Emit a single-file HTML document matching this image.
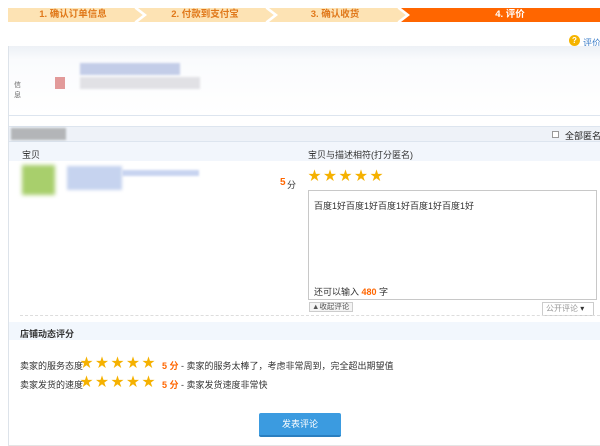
<!DOCTYPE html><html><head><meta charset="utf-8"><style>
*{margin:0;padding:0;box-sizing:border-box}
body{width:600px;height:446px;overflow:hidden;background:#fff;font-family:"Liberation Sans","Noto Sans CJK SC",sans-serif;font-size:9px;color:#333;position:relative}
.a{position:absolute;white-space:nowrap}
.step{position:absolute;top:8px;height:14px;line-height:14px;text-align:center;font-weight:bold;font-size:9.5px;color:#e0781a}
.st{color:#f5b100;font-size:13px;letter-spacing:2.5px;line-height:15px}
</style></head><body>
<svg class="a" style="left:8px;top:8px" width="592" height="14">
<polygon points="0,0 127,0 136,7 127,14 0,14" fill="#fde3b4"/>
<polygon points="130,0 258,0 267,7 258,14 130,14 139,7" fill="#fde3b4"/>
<polygon points="261,0 390,0 399,7 390,14 261,14 270,7" fill="#fde3b4"/>
<polygon points="393,0 592,0 592,14 393,14 402,7" fill="#ff6600"/>
<polyline points="127,0 136,7 127,14" fill="none" stroke="#fff" stroke-width="1.5"/>
<polyline points="258,0 267,7 258,14" fill="none" stroke="#fff" stroke-width="1.5"/>
<polyline points="390,0 399,7 390,14" fill="none" stroke="#fff" stroke-width="1.5"/>
</svg>
<div class="step" style="left:8px;width:130px">1. 确认订单信息</div>
<div class="step" style="left:140px;width:130px">2. 付款到支付宝</div>
<div class="step" style="left:270px;width:130px">3. 确认收货</div>
<div class="step" style="left:420px;width:180px;color:#fff">4. 评价</div>
<div class="a" style="left:569px;top:35px;width:11px;height:11px;border-radius:50%;background:#f5b400;color:#fff;font-size:8px;text-align:center;line-height:11px;font-weight:bold">?</div>
<div class="a" style="left:583px;top:36px;color:#3a7cc8">评价</div>
<div class="a" style="left:8px;top:46px;width:600px;height:400px;border-left:1px solid #dde3ea;border-bottom:1px solid #e5e5e5"></div>
<div class="a" style="left:9px;top:46px;width:591px;height:70px;background:linear-gradient(#edf1f6,#fafbfd 20%,#fff);border-bottom:1px solid #dde5ef"></div>
<div class="a" style="left:80px;top:63px;width:100px;height:12px;background:#c3cde8;filter:blur(1px)"></div>
<div class="a" style="left:55px;top:77px;width:10px;height:12px;background:#e29a9a"></div>
<div class="a" style="left:80px;top:77px;width:120px;height:12px;background:#e1e1e5;filter:blur(1px)"></div>
<div class="a" style="left:14px;top:81px;font-size:7px;line-height:10px;color:#666">信<br>息</div>
<div class="a" style="left:9px;top:126px;width:591px;height:16px;background:#eef2f8;border-top:1px solid #dde5ef;border-bottom:1px solid #dde5ef"></div>
<div class="a" style="left:11px;top:128px;width:55px;height:12px;background:#b3b5b8;filter:blur(1px)"></div>
<div class="a" style="left:552px;top:131px;width:7px;height:7px;border:1px solid #999;background:#fff"></div>
<div class="a" style="left:565px;top:129px;color:#222">全部匿名评</div>
<div class="a" style="left:9px;top:142px;width:591px;height:19px;background:#f2f6fc"></div>
<div class="a" style="left:22px;top:148px">宝贝</div>
<div class="a" style="left:308px;top:148px">宝贝与描述相符(打分匿名)</div>
<div class="a" style="left:22px;top:165px;width:33px;height:30px;background:#a8cf6c;filter:blur(2px)"></div>
<div class="a" style="left:67px;top:166px;width:55px;height:24px;background:#c6d3ef;filter:blur(1.5px)"></div>
<div class="a" style="left:122px;top:170px;width:77px;height:6px;background:#c8d4f0;filter:blur(1px)"></div>
<div class="a" style="left:280px;top:177px;color:#f60;font-weight:bold;font-size:10px">5</div>
<div class="a" style="left:287px;top:178px">分</div>
<div class="a st" style="left:308px;top:168px">★★★★★</div>
<div class="a" style="left:308px;top:190px;width:289px;height:110px;border:1px solid #c8c8c8;background:#fff"></div>
<div class="a" style="left:314px;top:199px">百度1好百度1好百度1好百度1好百度1好</div>
<div class="a" style="left:314px;top:285px">还可以输入 <b style="color:#f60">480</b> 字</div>
<div class="a" style="left:309px;top:302px;width:44px;height:10px;border:1px solid #ccc;background:#f4f4f4;font-size:7.5px;line-height:8px;padding-left:2px;color:#555">▲收起评论</div>
<div class="a" style="left:542px;top:302px;width:52px;height:14px;border:1px solid #ccc;font-size:8px;line-height:12px;padding-left:3px;color:#999">公开评论 <span style="color:#333">▾</span></div>
<div class="a" style="left:20px;top:315px;width:580px;border-top:1px dashed #ddd"></div>
<div class="a" style="left:9px;top:322px;width:591px;height:18px;background:#f2f7fd"></div>
<div class="a" style="left:20px;top:327px;font-weight:bold">店铺动态评分</div>
<div class="a" style="left:20px;top:359px">卖家的服务态度</div>
<div class="a st" style="left:80px;top:355px">★★★★★</div>
<div class="a" style="left:162px;top:359px"><b style="color:#f60">5 分</b> - 卖家的服务太棒了，考虑非常周到，完全超出期望值</div>
<div class="a" style="left:20px;top:378px">卖家发货的速度</div>
<div class="a st" style="left:80px;top:374px">★★★★★</div>
<div class="a" style="left:162px;top:378px"><b style="color:#f60">5 分</b> - 卖家发货速度非常快</div>
<div class="a" style="left:259px;top:413px;width:82px;height:24px;background:#3b9be0;border-bottom:2px solid #2a7fc0;border-radius:2px;color:#fff;text-align:center;line-height:22px;font-size:9px">发表评论</div>
</body></html>
